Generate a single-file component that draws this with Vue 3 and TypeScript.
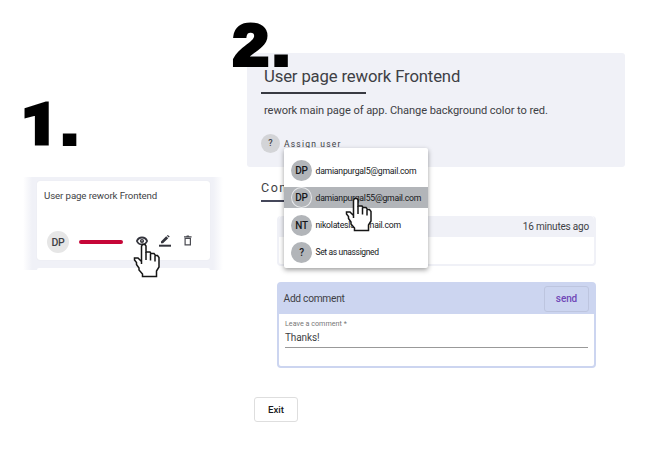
<script setup lang="ts">
interface Assignee {
  initials: string
  label: string
  active?: boolean
}

const task = {
  title: 'User page rework Frontend',
  description: 'rework main page of app. Change background color to red.',
  owner: 'DP',
}

const assignees: Assignee[] = [
  { initials: 'DP', label: 'damianpurgal5@gmail.com' },
  { initials: 'DP', label: 'damianpurgal55@gmail.com', active: true },
  { initials: 'NT', label: 'nikolatesla@gmail.com' },
  { initials: '?', label: 'Set as unassigned' },
]

const hand =
  'M8.500 21V3.500L9.500 1.500H12L13 3V9H17L18 10.500H21L22.500 12.500H24.500L26 14.500V24L23.500 28V33.500H9.500V31L6 27V25L3.500 21.500V19.500L1.500 17V15H5L8.500 18.500z'
const knuckles = 'M13 9v8M17.500 10.500v7M22 12.500v6'
</script>

<template>
  <div class="page">
    <section class="board">
      <div class="step"><span class="one">1</span>.</div>
      <div class="lane">
        <article class="card">
          <h3 class="card-title">{{ task.title }}</h3>
          <div class="card-row">
            <span class="owner">{{ task.owner }}</span>
            <span class="priority"></span>
            <svg class="icon eye" viewBox="0 0 12 12">
              <path d="M.9 6C1.800 3.700 3.700 2.500 6 2.500S10.200 3.700 11.100 6C10.200 8.300 8.300 9.500 6 9.500S1.800 8.300.9 6z" fill="none" stroke="#34353d" stroke-width="1.800" />
              <circle cx="6" cy="6" r="2.100" fill="#34353d" />
              <circle cx="6" cy="5.800" r=".7" fill="#ccc" />
            </svg>
            <svg class="icon pen" viewBox="0 0 12 12">
              <path d="M2 8.300V6.500L7.200 1.300 9.200 3.200 4 8.300z M7.900.7 8.800-.1 10.700 1.600 9.800 2.500z" fill="#34353d" />
              <path d="M0 9.700h12v2H0z" fill="#34353d" />
            </svg>
            <svg class="icon bin" viewBox="0 0 12 12">
              <path d="M3.100 3.300h5.300v6.500H3.100z" fill="none" stroke="#4a4b52" stroke-width="1.200" />
              <path d="M2 1.200h2.300l.5-.7h2l.5.700h2.300v1.200H2z" fill="#4a4b52" />
            </svg>
          </div>
          <svg class="cursor on-card" viewBox="0 0 28 35">
            <path :d="hand" fill="#fff" stroke="#161616" stroke-width="1.500" />
            <path :d="knuckles" stroke="#161616" stroke-width="1.500" />
          </svg>
        </article>
        <div class="card next"></div>
      </div>
    </section>

    <section class="detail">
      <div class="step over">2.</div>
      <header class="head">
        <h1 class="title">{{ task.title }}</h1>
        <div class="rule"></div>
        <p class="description">{{ task.description }}</p>
        <div class="assign">
          <span class="unknown">?</span>
          <span class="assign-label">Assign user</span>
          <div class="menu">
            <div v-for="a in assignees" :key="a.label" class="option" :class="{ active: a.active }">
              <span class="avatar">{{ a.initials }}</span>
              <span class="email">{{ a.label }}</span>
            </div>
            <svg class="cursor on-menu" viewBox="0 0 28 35">
              <path :d="hand" fill="#fff" stroke="#161616" stroke-width="1.500" />
              <path :d="knuckles" stroke="#161616" stroke-width="1.500" />
            </svg>
          </div>
        </div>
      </header>
      <div class="comments">
        <h2 class="comments-title">Comments</h2>
        <article class="comment">
          <div class="comment-head">16 minutes ago</div>
          <div class="comment-body"></div>
        </article>
        <form class="composer">
          <div class="composer-head">
            <span class="composer-title">Add comment</span>
            <button type="button" class="send">send</button>
          </div>
          <div class="composer-body">
            <label class="field-label">Leave a comment *</label>
            <div class="field">Thanks!</div>
          </div>
        </form>
      </div>
      <button type="button" class="exit">Exit</button>
    </section>
  </div>
</template>

<style>
body {
  background: #fff;
  overflow: hidden;
}
</style>

<style scoped>
* {
  box-sizing: border-box;
  margin: 0;
}
.page {
  display: flex;
  width: 655px;
  height: 463px;
  font-family: Roboto, sans-serif;
  color: #3e3f45;
}
.board {
  width: 247px;
  padding-top: 94px;
}
.step {
  width: 60px;
  height: 60px;
  margin-left: 21px;
  font: 700 57px/60px "Liberation Sans", Arial, sans-serif;
  letter-spacing: 3.300px;
  -webkit-text-stroke: 4px #000;
  transform: scaleX(1.12);
  transform-origin: 0 0;
  white-space: nowrap;
  color: #000;
}
.one {
  font: 900 57px/0 Roboto, sans-serif;
  letter-spacing: 2.500px;
  -webkit-text-stroke: 3px #000;
}
.lane {
  width: 200px;
  height: 93px;
  margin: 23px 0 0 23px;
  padding: 4px 13px 0 14px;
  background: linear-gradient(90deg, #fff 0, #f0f1f7 9px, #f0f1f7 190px, #fff 200px);
}
.card {
  position: relative;
  height: 79px;
  padding: 9px 7px 0;
  background: #fff;
  border-radius: 3px;
  box-shadow: 0 0 1px #dcdde3;
}
.card.next {
  height: 2px;
  margin-top: 8px;
  padding: 0;
  border-radius: 3px 3px 0 0;
  box-shadow: none;
}
.card-title {
  font-size: 9.700px;
  line-height: 12px;
  font-weight: 400;
  letter-spacing: -.11px;
  white-space: nowrap;
}
.card-row {
  display: flex;
  align-items: center;
  height: 22px;
  margin: 29px 0 0 3px;
}
.owner {
  width: 22px;
  height: 22px;
  border-radius: 50%;
  background: #e6e6e6;
  font: 500 10.500px/23px Roboto, sans-serif;
  letter-spacing: -.2px;
  text-align: center;
}
.priority {
  width: 44px;
  height: 4px;
  margin-left: 10px;
  border-radius: 2px;
  background: #c60638;
}
.icon {
  width: 12px;
  height: 12px;
  margin-top: -3px;
  overflow: visible;
}
.eye { margin-left: 12.500px; }
.pen { margin-left: 11.500px; }
.bin { margin-left: 11px; }
.cursor {
  position: absolute;
  z-index: 1;
  width: 28px;
  height: 35px;
}
.on-card { left: 96px; top: 62px; }
.on-menu { left: 61px; top: 49px; }

.detail {
  position: relative;
  width: 378px;
  padding-top: 53px;
}
.over {
  position: absolute;
  left: -14px;
  top: 15px;
  margin-left: 0;
}
.head {
  height: 114px;
  padding: 13px 14px 0;
  border-radius: 3px;
  background: #f0f1f7;
}
.title {
  margin-left: 3px;
  font-size: 16.700px;
  line-height: 21px;
  font-weight: 400;
  letter-spacing: -.14px;
}
.rule {
  width: 105px;
  height: 2px;
  margin-top: 5px;
  background: #383a42;
}
.description {
  margin: 10px 0 0 3px;
  font-size: 11.100px;
  line-height: 14px;
  letter-spacing: -.08px;
  white-space: nowrap;
}
.assign {
  position: relative;
  display: flex;
  align-items: center;
  gap: 4px;
  height: 19px;
  margin-top: 16px;
}
.unknown {
  width: 19px;
  height: 19px;
  border-radius: 50%;
  background: #d3d4d7;
  font: 500 9px/19px Roboto, sans-serif;
  text-align: center;
}
.assign-label {
  font-size: 8.500px;
  letter-spacing: 1.200px;
}
.menu {
  position: absolute;
  z-index: 2;
  left: 23px;
  top: 14px;
  width: 144px;
  height: 120px;
  padding-top: 9px;
  background: #fff;
  border-radius: 2px;
  box-shadow: 0 2px 5px rgba(0, 0, 0, .38);
  color: #16171a;
}
.option {
  display: flex;
  align-items: center;
  gap: 4px;
  height: 27.400px;
  padding-left: 7px;
}
.option.active {
  height: 21px;
  margin: 3px 0;
  background: #b2b5b9;
}
.avatar {
  width: 21px;
  height: 21px;
  border-radius: 50%;
  background: #b2b5b9;
  font: 500 10px/21px Roboto, sans-serif;
  letter-spacing: -.2px;
  text-align: center;
}
.active .avatar { box-shadow: inset 0 0 0 1px #e8e9eb; }
.email {
  margin-left: -.5px;
  font-size: 8.700px;
  letter-spacing: -.25px;
  white-space: nowrap;
}
.option:last-of-type .email {
  font-size: 8.500px;
  letter-spacing: -.35px;
}

.comments { padding: 13px 29px 0 14px; }
.comments-title {
  width: 60px;
  height: 22px;
  font-size: 12.500px;
  line-height: 15px;
  font-weight: 400;
  letter-spacing: 1.500px;
  border-bottom: 2px solid #44475a;
}
.comment {
  height: 50px;
  margin: 14px 0 0 16px;
  border: 2px solid #f0f1f7;
  border-top: 0;
  border-radius: 4px;
}
.comment-head {
  height: 21px;
  padding-right: 5px;
  background: #f0f1f7;
  border-radius: 4px 4px 0 0;
  font-size: 10px;
  line-height: 22px;
  letter-spacing: -.2px;
  text-align: right;
}
.composer {
  height: 86px;
  margin: 16px 0 0 16px;
  border: 2px solid #ccd5f0;
  border-radius: 4px;
}
.composer-head {
  display: flex;
  align-items: center;
  justify-content: space-between;
  height: 30px;
  padding: 0 5px 0 4.500px;
  background: #ccd5f0;
}
.composer-title {
  margin-top: -1px;
  font-size: 10.200px;
  letter-spacing: -.27px;
}
.send {
  width: 45px;
  height: 26px;
  padding: 0 0 1px;
  border: 1px solid #bdc5df;
  border-radius: 3px;
  background: none;
  color: #7048b7;
  font: 500 10px Roboto, sans-serif;
  letter-spacing: -.1px;
}
.composer-body { padding: 4px 6px 0 6px; }
.field-label {
  display: block;
  color: #777;
  font-size: 7.200px;
  line-height: 11px;
}
.field {
  height: 19px;
  border-bottom: 1px solid #999;
  font-size: 10px;
  line-height: 17px;
  letter-spacing: -.1px;
}
.exit {
  width: 44px;
  height: 25px;
  margin: 29px 0 0 7px;
  padding: 0;
  border: 1px solid #dedede;
  border-radius: 3px;
  background: #fff;
  color: #18191c;
  font: 500 9.700px Roboto, sans-serif;
}
</style>
